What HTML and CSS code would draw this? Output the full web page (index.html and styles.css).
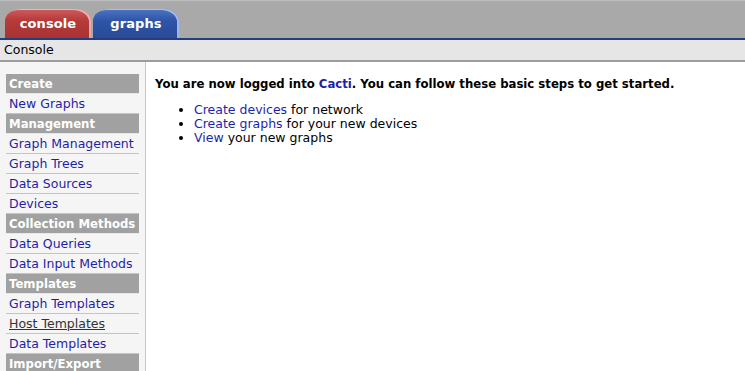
FILE: index.html
```html
<!DOCTYPE html>
<html lang="en">
<head>
  <meta charset="UTF-8" />
  <title>Console</title>
  <link rel="stylesheet" href="styles.css">
</head>
<body>
  <div class="topbar">
    <div class="tab tab-console">console</div>
    <div class="tab tab-graphs">graphs</div>
  </div>
  <div class="crumbs">Console</div>
  <div class="page">
    <div class="sidebar">
      <ul class="menu">
        <li class="head">Create</li>
        <li><a href="#">New Graphs</a></li>
        <li class="head">Management</li>
        <li><a href="#">Graph Management</a></li>
        <li><a href="#">Graph Trees</a></li>
        <li><a href="#">Data Sources</a></li>
        <li><a href="#">Devices</a></li>
        <li class="head">Collection Methods</li>
        <li><a href="#">Data Queries</a></li>
        <li><a href="#">Data Input Methods</a></li>
        <li class="head">Templates</li>
        <li><a href="#">Graph Templates</a></li>
        <li><a href="#" class="hover">Host Templates</a></li>
        <li><a href="#">Data Templates</a></li>
        <li class="head">Import/Export</li>
      </ul>
    </div>
    <div class="content">
      <p class="intro">You are now logged into <a href="#">Cacti</a>. You can follow these basic steps to get started.</p>
      <ul class="steps">
        <li><a href="#">Create devices</a> for network</li>
        <li><a href="#">Create graphs</a> for your new devices</li>
        <li><a href="#">View</a> your new graphs</li>
      </ul>
    </div>
  </div>
</body>
</html>
```

FILE: styles.css
```css
* { box-sizing: border-box; margin: 0; padding: 0; }
body {
  font-family: "DejaVu Sans", Verdana, sans-serif;
  font-size: 12.5px;
  color: #000;
  background: #fff;
  overflow: hidden;
}
a { color: #1f1fa8; text-decoration: none; }

.topbar {
  height: 40px;
  background: #a9a9a9;
  border-top: 1px solid #bdbdbd;
  border-bottom: 2px solid #233f7c;
  display: flex;
  align-items: flex-end;
  padding-left: 5px;
  gap: 2px;
}
.tab {
  width: 86px;
  height: 29px;
  border-radius: 16px 16px 0 0 / 12px 12px 0 0;
  color: #fff;
  font-weight: bold;
  font-size: 13px;
  letter-spacing: 0.1px;
  text-align: center;
  padding-top: 7px;
}
.tab-console {
  background: linear-gradient(#cf5c5c, #b63a3a 40%, #a83232);
  box-shadow: inset -2px 1px 0 rgba(255, 220, 220, 0.7);
}
.tab-graphs {
  background: linear-gradient(#4c74c4, #2f55a8 40%, #284a98);
  box-shadow: inset -2px 1px 0 rgba(210, 225, 255, 0.7);
}

.crumbs {
  height: 22px;
  background: #e6e6e6;
  border-bottom: 2px solid #9d9d9d;
  padding: 2px 4px;
  line-height: 16px;
}

.page { display: flex; height: 320px; }
.sidebar {
  width: 146px;
  background: #f5f5f5;
  border-right: 1px solid #c8c8c8;
  padding: 12px 6px 0 6px;
}
.menu { list-style: none; width: 133px; }
.menu li {
  height: 20px;
  line-height: 20px;
  padding-left: 3px;
  border-bottom: 1px solid #c4c4c4;
  white-space: nowrap;
}
.menu li.head {
  background: #a1a1a1;
  color: #fff;
  font-weight: bold;
  font-size: 11.7px;
  border-bottom: 1px solid #e8e8e8;
}
.menu a.hover { color: #333; text-decoration: underline; }

.content { flex: 1; padding: 14px 0 0 9px; }
.intro { font-weight: bold; font-size: 11.7px; line-height: 16px; margin-bottom: 11px; }
.steps { padding-left: 39px; line-height: 14px; }
```
